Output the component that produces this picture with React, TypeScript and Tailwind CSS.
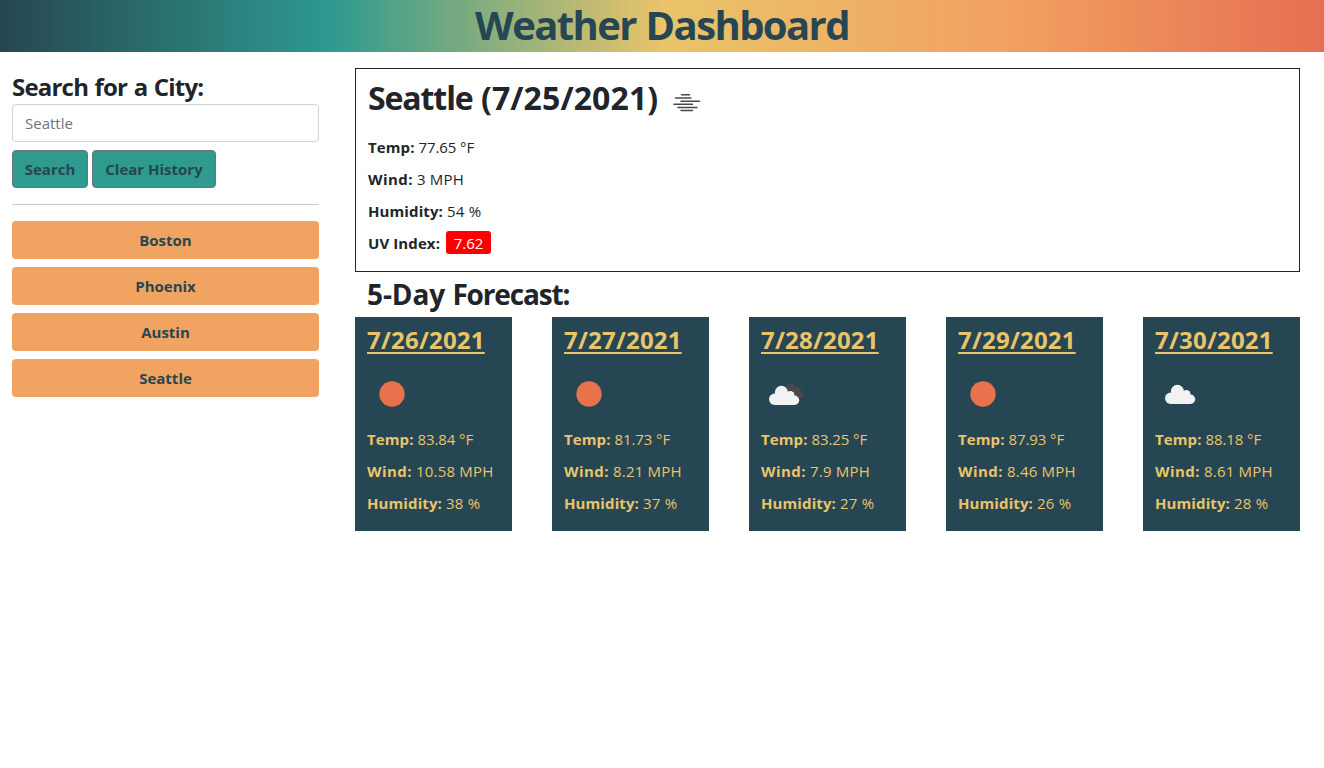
import type { ReactNode } from "react";

type IconName = "sun" | "clouds" | "cloud";

const cities = ["Boston", "Phoenix", "Austin", "Seattle"];

const forecast: { date: string; icon: IconName; temp: string; wind: string; humidity: string }[] = [
  { date: "7/26/2021", icon: "sun", temp: "83.84", wind: "10.58", humidity: "38" },
  { date: "7/27/2021", icon: "sun", temp: "81.73", wind: "8.21", humidity: "37" },
  { date: "7/28/2021", icon: "clouds", temp: "83.25", wind: "7.9", humidity: "27" },
  { date: "7/29/2021", icon: "sun", temp: "87.93", wind: "8.46", humidity: "26" },
  { date: "7/30/2021", icon: "cloud", temp: "88.18", wind: "8.61", humidity: "28" },
];

function Cloud({ x, y }: { x: number; y: number }) {
  return (
    <g transform={`translate(${x} ${y})`} fill="#f2f2f2">
      <circle cx="5.7" cy="13.500" r="5.7" />
      <circle cx="12.4" cy="6.500" r="6.500" />
      <circle cx="21.300" cy="9.400" r="4.200" />
      <circle cx="25.500" cy="14.500" r="4.700" />
      <path d="M5.7 19.200V8L10 9H22L26 11V19.200Z" />
    </g>
  );
}

function WeatherIcon({ name }: { name: IconName }) {
  return (
    <svg className="block size-[50px]" viewBox="0 0 50 50" aria-hidden="true">
      {name === "sun" && <circle cx="25" cy="25" r="12.7" fill="#e9714c" />}
      {name === "clouds" && (
        <>
          <g fill="#484848">
            <circle cx="29.500" cy="20.500" r="5.800" />
            <circle cx="36" cy="22" r="4" />
            <circle cx="38.800" cy="26" r="3.700" />
            <path d="M24 19L36 20L39 29.500L34 29Z" />
          </g>
          <Cloud x={8} y={16.8} />
        </>
      )}
      {name === "cloud" && <Cloud x={10} y={15.8} />}
    </svg>
  );
}

function MistIcon() {
  return (
    <svg
      className="block h-[19px] w-7"
      viewBox="0 0 28 19"
      stroke="#48484a"
      strokeWidth="1.5"
      strokeLinecap="round"
      aria-hidden="true"
    >
      <path d="M8.500 1.800H16.500M2.500 5H18M8 8.200H26.500M1 11.300H19.500M5 14.400H24M8 17.500H19.500" />
    </svg>
  );
}

function Stat({ label, children }: { label: string; children: ReactNode }) {
  return (
    <p className="flex h-6 items-center gap-1 text-[15px] whitespace-nowrap">
      <strong className={label === "Wind" ? "tracking-[0.45px]" : "tracking-[0.1px]"}>{label}:</strong>
      {children}
    </p>
  );
}

function Conditions({ temp, wind, humidity }: { temp: string; wind: string; humidity: string }) {
  return (
    <>
      <Stat label="Temp">
        <span className="tracking-[-0.1px]">{temp} °F</span>
      </Stat>
      <Stat label="Wind">
        <span className="tracking-[0.2px]">{wind} MPH</span>
      </Stat>
      <Stat label="Humidity">
        <span className="tracking-[0.25px]">{humidity} %</span>
      </Stat>
    </>
  );
}

export default function App() {
  return (
    <div className="min-h-screen bg-white font-['Open_Sans','Noto_Sans',sans-serif] text-base leading-6 text-[#212529]">
      <header className="h-[52px] bg-[linear-gradient(90deg,#264653,#2e9a8f,#e9c46a,#f2a362,#e66f51)] text-center">
        <h1 className="text-[40px] leading-[50px] font-bold tracking-[-1.6px] text-[#264653] [word-spacing:1px]">
          Weather Dashboard
        </h1>
      </header>

      <div className="flex pt-4">
        <aside className="w-[331px] shrink-0 px-3 pt-[3px]">
          <h2 className="h-[33px] text-[24px] leading-8 font-bold tracking-[-0.8px] [word-spacing:1px]">
            Search for a City:
          </h2>
          <input
            className="block h-[38px] w-full rounded border border-[#ced4da] px-3 text-[15px] placeholder:text-[#6c757d]"
            placeholder="Seattle"
          />
          <div className="mt-2 flex gap-1 text-[15px] font-bold text-[#264653]">
            <button className="h-[38px] w-[76px] rounded border border-[#6c757d] bg-[#2f9b8f]">Search</button>
            <button className="h-[38px] w-[124px] rounded border border-[#6c757d] bg-[#2f9b8f]">Clear History</button>
          </div>
          <hr className="my-4 border-[#c7c8ca]" />
          <div className="flex flex-col gap-2">
            {cities.map((city) => (
              <button key={city} className="h-[38px] rounded bg-[#f1a461] text-[15px] font-bold text-[#264653]">
                {city}
              </button>
            ))}
          </div>
        </aside>

        <main className="ml-6 w-[945px]">
          <section className="h-[204px] border border-[#212529] px-3">
            <div className="flex h-[58px] items-center">
              <h2 className="w-[305px] text-[32px] leading-10 font-bold whitespace-nowrap">
                <span className="tracking-[-1.1px]">Seattle</span> <span className="tracking-[0.1px]">(7/25/2021)</span>
              </h2>
              <div className="pt-2">
                <MistIcon />
              </div>
            </div>
            <div className="flex flex-col gap-2 pt-2">
              <Conditions temp="77.65" wind="3" humidity="54" />
              <Stat label="UV Index">
                <span className="mb-0.5 ml-0.5 flex h-[23px] w-[45px] items-center justify-center rounded-[3px] bg-[#fa0000] pt-px text-white">
                  7.62
                </span>
              </Stat>
            </div>
          </section>

          <h2 className="h-[45px] pl-3 text-[28px] leading-[45px] font-bold">
            <span className="tracking-[-0.1px]">5-Day</span> <span className="tracking-[-1.15px]">Forecast:</span>
          </h2>
          <section className="grid grid-cols-5 gap-10">
            {forecast.map((day) => (
              <article key={day.date} className="h-[214px] bg-[#264653] px-3 pt-[7px] text-[#e9c46a]">
                <h3 className="h-[33px] text-[24px] leading-8 font-bold tracking-[0.2px] underline decoration-2 underline-offset-[3px] [text-decoration-skip-ink:none]">
                  {day.date}
                </h3>
                <div className="mt-3">
                  <WeatherIcon name={day.icon} />
                </div>
                <div className="mt-2 flex flex-col gap-2">
                  <Conditions temp={day.temp} wind={day.wind} humidity={day.humidity} />
                </div>
              </article>
            ))}
          </section>
        </main>
      </div>
    </div>
  );
}
